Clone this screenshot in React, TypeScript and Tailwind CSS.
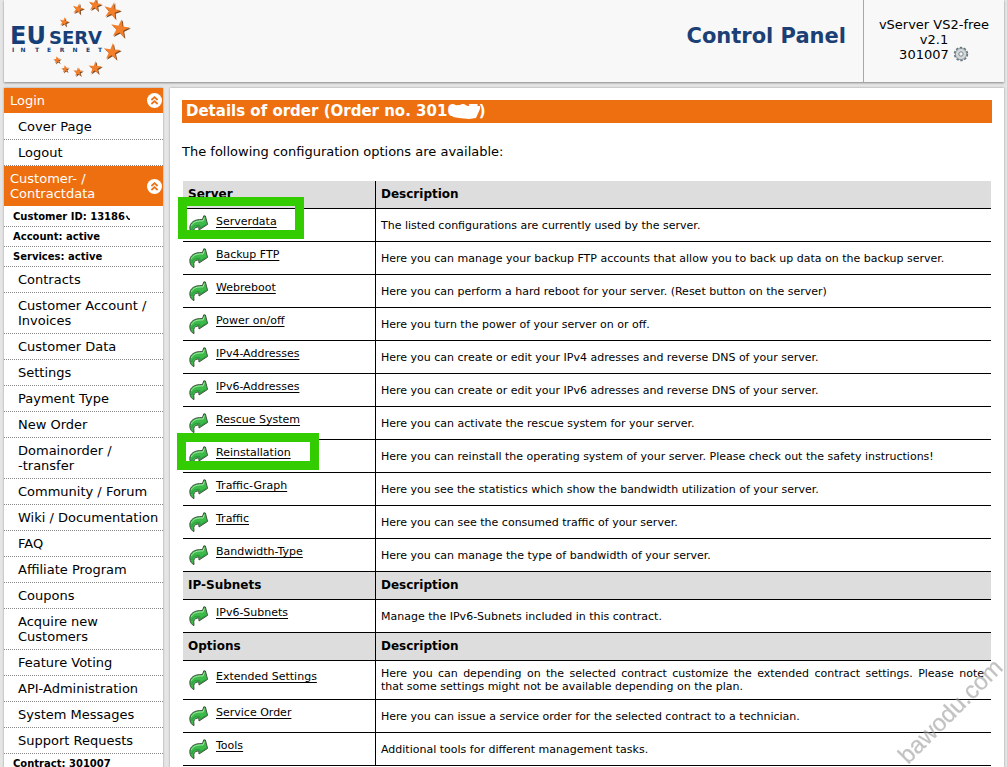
import React from "react";

type Item = { label: string; small?: boolean; smudge?: boolean };
type Row = { name: string; text: string; mark?: string };
type Section = { title: string; rows: Row[] };

const loginItems: Item[] = [{ label: "Cover Page" }, { label: "Logout" }];

const contractItems: Item[] = [
  { label: "Customer ID: 13186", small: true, smudge: true },
  { label: "Account: active", small: true },
  { label: "Services: active", small: true },
  { label: "Contracts" },
  { label: "Customer Account /\nInvoices" },
  { label: "Customer Data" },
  { label: "Settings" },
  { label: "Payment Type" },
  { label: "New Order" },
  { label: "Domainorder /\n-transfer" },
  { label: "Community / Forum" },
  { label: "Wiki / Documentation" },
  { label: "FAQ" },
  { label: "Affiliate Program" },
  { label: "Coupons" },
  { label: "Acquire new\nCustomers" },
  { label: "Feature Voting" },
  { label: "API-Administration" },
  { label: "System Messages" },
  { label: "Support Requests" },
  { label: "Contract: 301007", small: true },
];

const sections: Section[] = [
  {
    title: "Server",
    rows: [
      { name: "Serverdata", text: "The listed configurations are currently used by the server.", mark: "-left-[5px] -top-[12px] h-[42px] w-[126px]" },
      { name: "Backup FTP", text: "Here you can manage your backup FTP accounts that allow you to back up data on the backup server." },
      { name: "Webreboot", text: "Here you can perform a hard reboot for your server. (Reset button on the server)" },
      { name: "Power on/off", text: "Here you turn the power of your server on or off." },
      { name: "IPv4-Addresses", text: "Here you can create or edit your IPv4 adresses and reverse DNS of your server." },
      { name: "IPv6-Addresses", text: "Here you can create or edit your IPv6 adresses and reverse DNS of your server." },
      { name: "Rescue System", text: "Here you can activate the rescue system for your server." },
      { name: "Reinstallation", text: "Here you can reinstall the operating system of your server. Please check out the safety instructions!", mark: "-left-[6px] -top-[7px] h-[37px] w-[142px]" },
      { name: "Traffic-Graph", text: "Here you see the statistics which show the bandwidth utilization of your server." },
      { name: "Traffic", text: "Here you can see the consumed traffic of your server." },
      { name: "Bandwidth-Type", text: "Here you can manage the type of bandwidth of your server." },
    ],
  },
  { title: "IP-Subnets", rows: [{ name: "IPv6-Subnets", text: "Manage the IPv6-Subnets included in this contract." }] },
  {
    title: "Options",
    rows: [
      { name: "Extended Settings", text: "Here you can depending on the selected contract customize the extended contract settings. Please note that\u00a0some settings might not be available depending on the plan." },
      { name: "Service Order", text: "Here you can issue a service order for the selected contract to a technician." },
      { name: "Tools", text: "Additional tools for different management tasks." },
    ],
  },
];

const stars: [number, number, number, number][] = [
  [60, 22, 5, 12],
  [74, 9, 6, 14],
  [91, 5, 7, 10],
  [108, 11, 9, 14],
  [116, 29, 10, 10],
  [108, 52, 9, 6],
  [91, 68, 7, 4],
  [74, 72, 5, 0],
  [61, 69, 4, -4],
  [53, 60, 4, -6],
];

function starPoints(cx: number, cy: number, r: number, turn: number) {
  return Array.from({ length: 10 }, (_, i) => {
    const a = ((i * 36 - 90 + turn) * Math.PI) / 180;
    const d = i % 2 ? r * 0.36 : r;
    return `${(cx + d * Math.cos(a)).toFixed(1)},${(cy + d * Math.sin(a)).toFixed(1)}`;
  }).join(" ");
}

function Logo() {
  return (
    <svg width="130" height="82" viewBox="0 0 130 82" role="img" aria-label="EUserv Internet">
      {stars.map(([x, y, r, t]) => (
        <g key={`${x}-${y}`}>
          <polygon points={starPoints(x + 1, y + 1, r, t)} fill="#7c4a25" />
          <polygon points={starPoints(x, y, r, t)} fill="#f47f2a" />
        </g>
      ))}
      <g fill="#163f78" fontFamily="'DejaVu Sans', sans-serif" fontWeight="700">
        <text x="6" y="44" fontSize="24">EU</text>
        <text x="45" y="44" fontSize="18">SERV</text>
        <text x="9 19 33 45 58 71 84 96" y="52" fontSize="6" textAnchor="middle">INTERNET</text>
      </g>
    </svg>
  );
}

function Gear() {
  return (
    <svg className="-mt-1 inline-block align-middle" width="16" height="16" viewBox="0 0 16 16" aria-hidden="true">
      <circle cx="8" cy="8" r="6.3" fill="none" stroke="#66747c" strokeWidth="1.8" strokeDasharray="2.4 1.56" />
      <circle cx="8" cy="8" r="5.6" fill="#d3d8da" stroke="#7b878d" strokeWidth="0.8" />
      <circle cx="8" cy="8" r="2.2" fill="#f4f4f4" stroke="#7b878d" strokeWidth="1" />
    </svg>
  );
}

function Arrow() {
  return (
    <svg className="shrink-0" width="20" height="21" viewBox="0 0 20 21" aria-hidden="true">
      <path
        d="M14.8 0.8 L16.4 1 L18.6 9.4 L10 15 L9.8 12 C7.4 11.8 5 13.2 4.8 15.4 L5 19.6 C2.8 19 0.8 16.2 0.8 12.8 C0.8 7.8 5 4 13.4 4.6 Z"
        fill="#3cba4a"
        stroke="#3a4436"
        strokeWidth="0.9"
        strokeLinejoin="round"
      />
      <path d="M2.4 10.8 C4 7 8.4 5.6 14 6 L15.4 2.6" fill="none" stroke="#a5eba5" strokeWidth="1" />
      <path d="M2.8 15 C3.2 11.4 6.6 10 10.8 10.4 L11.2 13 L16.6 9.4" fill="none" stroke="#22913a" strokeWidth="0.8" />
    </svg>
  );
}

function Toggle({ title }: { title: string }) {
  return (
    <button type="button" aria-label={`Collapse ${title}`} className="mr-[1px] flex size-[15px] shrink-0 items-center justify-center rounded-full bg-white">
      <svg width="11" height="11" viewBox="0 0 11 11" fill="none" stroke="#ee6f10" strokeWidth="1.7" aria-hidden="true">
        <path d="M2.4 5 L5.5 2.2 L8.6 5 M2.4 9 L5.5 6.2 L8.6 9" />
      </svg>
    </button>
  );
}

function Menu({ title, items }: { title: string; items: Item[] }) {
  return (
    <section>
      <div className="mb-px flex items-center justify-between bg-[#ee6f10] py-[5px] pl-[6px] text-white">
        <h2 className="w-[110px]">{title}</h2>
        <Toggle title={title} />
      </div>
      <ul>
        {items.map((item) => (
          <li key={item.label} className="border-b border-dotted border-[#888888]">
            {item.small ? (
              <p className="py-[2px] pl-[9px] text-[10px] font-bold">
                {item.label}
                {item.smudge && (
                  <svg className="ml-px inline-block align-baseline" width="5" height="5" viewBox="0 0 5 5" aria-hidden="true">
                    <path d="M0.6 0.6 Q1.4 4 4 4.4" fill="none" stroke="#000000" strokeWidth="1.3" />
                  </svg>
                )}
              </p>
            ) : (
              <a href="#" className="block py-[5px] pr-1 pl-[14px] whitespace-pre-line">{item.label}</a>
            )}
          </li>
        ))}
      </ul>
    </section>
  );
}

function Details() {
  return (
    <table className="mt-[22px] w-full border-separate border-spacing-0 text-left">
      {sections.map((s) => (
        <tbody key={s.title}>
          <tr className="bg-[#dddddd] text-[12px]">
            <th className="h-[28px] w-[193px] border-r border-b border-black pl-[5px]">{s.title}</th>
            <th className="border-b border-black pl-[5px]">Description</th>
          </tr>
          {s.rows.map((r) => (
            <tr key={r.name} className="text-[11px] leading-[13px]">
              <td className="relative h-[33px] border-r border-b border-black p-0 align-middle">
                <div className="flex pt-[6px] pb-[5px] pl-[6px]">
                  <Arrow />
                  <a href="#" className="ml-[7px] self-start underline underline-offset-2">{r.name}</a>
                </div>
                {r.mark && <span className={`pointer-events-none absolute border-[9px] border-[#33cc00] ${r.mark}`} />}
              </td>
              <td className="border-b border-black py-[6px] pr-[7px] pl-[5px] text-justify">{r.text}</td>
            </tr>
          ))}
        </tbody>
      ))}
    </table>
  );
}

export default function App() {
  return (
    <div className="flex min-h-screen flex-col bg-[#e5e5e5] pr-[3px] pl-1 font-['DejaVu_Sans',Verdana,sans-serif] text-[13px] leading-[15px] text-black">
      <header className="flex h-[82px] bg-[#f8f8f8] shadow-[0_1px_2px_#888888]">
        <Logo />
        <h1 className="mt-[23px] ml-auto pr-[17px] text-[21px] leading-[26px] font-bold text-[#1c3f75]">Control Panel</h1>
        <div className="w-[141px] border-l border-[#a8a8a8] px-3 pt-[17px] text-center">
          <p>vServer VS2-free v2.1</p>
          <p>301007 <Gear /></p>
        </div>
      </header>
      <div className="mt-[6px] flex grow gap-[7px]">
        <nav className="w-[159px] shrink-0 bg-white shadow-[0_0_2px_#999999]">
          <Menu title="Login" items={loginItems} />
          <Menu title="Customer- / Contractdata" items={contractItems} />
        </nav>
        <main className="min-w-0 grow bg-white px-[13px] pt-3 shadow-[0_0_2px_#999999]">
          <div className="-mx-px bg-[#ee6f10] pl-1 text-white">
            <h2 className="relative w-fit text-[15px] leading-[23px] font-bold">
              Details of order (Order no. 301007)
              <svg className="absolute top-[5px] right-[5px]" width="34" height="14" viewBox="0 0 34 14" aria-hidden="true">
                <path d="M3 1 L12 0 L22 1 L33 1 L33 4 L29 13 L22 14 L12 13 L6 12 L3 8 Z" fill="#ffffff" />
              </svg>
            </h2>
          </div>
          <p className="-ml-px mt-[21px]">The following configuration options are available:</p>
          <Details />
        </main>
      </div>
      <div className="pointer-events-none fixed right-0 bottom-0 size-[112px]" aria-hidden="true">
        <svg width="112" height="112" viewBox="0 0 112 112">
          <text x="13" y="110" transform="rotate(-45 13 110)" fontFamily="'Liberation Sans', sans-serif" fontSize="24" fill="#9a9a9a" stroke="#9a9a9a" strokeWidth="0.3" opacity="0.6">bawodu.com</text>
        </svg>
      </div>
    </div>
  );
}
